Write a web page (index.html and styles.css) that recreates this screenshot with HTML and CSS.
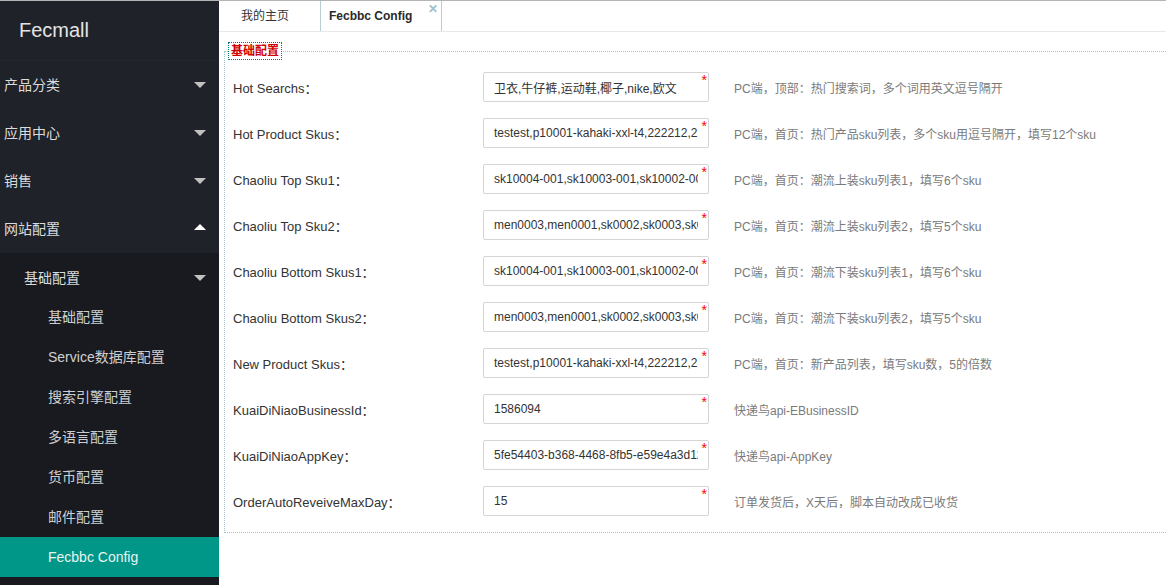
FILE: index.html
```html
<!DOCTYPE html>
<html lang="zh-CN">
<head>
<meta charset="utf-8">
<title>Fecbbc Config</title>
<link rel="stylesheet" href="styles.css">
</head>
<body>
<div class="app">
  <aside class="side">
    <div class="logo">Fecmall</div>
    <ul class="menu">
      <li class="m1"><span>产品分类</span><i class="tri down"></i></li>
      <li class="m1"><span>应用中心</span><i class="tri down"></i></li>
      <li class="m1"><span>销售</span><i class="tri down"></i></li>
      <li class="m1"><span>网站配置</span><i class="tri up"></i></li>
    </ul>
    <ul class="sub">
      <li class="m2"><span>基础配置</span><i class="tri down"></i></li>
      <li class="m3">基础配置</li>
      <li class="m3">Service数据库配置</li>
      <li class="m3">搜索引擎配置</li>
      <li class="m3">多语言配置</li>
      <li class="m3">货币配置</li>
      <li class="m3">邮件配置</li>
      <li class="m3 active">Fecbbc Config</li>
    </ul>
  </aside>
  <main class="main">
    <div class="tabs">
      <div class="tab home">我的主页</div>
      <div class="tab cur">Fecbbc Config<span class="close">✕</span></div>
    </div>
    <fieldset class="box">
      <legend>基础配置</legend>
      <div class="row"><label>Hot Searchs：</label><div class="field"><input value="卫衣,牛仔裤,运动鞋,椰子,nike,欧文"><b>*</b></div><span class="tip">PC端，顶部：热门搜索词，多个词用英文逗号隔开</span></div>
      <div class="row"><label>Hot Product Skus：</label><div class="field"><input value="testest,p10001-kahaki-xxl-t4,222212,222213"><b>*</b></div><span class="tip">PC端，首页：热门产品sku列表，多个sku用逗号隔开，填写12个sku</span></div>
      <div class="row"><label>Chaoliu Top Sku1：</label><div class="field"><input value="sk10004-001,sk10003-001,sk10002-001"><b>*</b></div><span class="tip">PC端，首页：潮流上装sku列表1，填写6个sku</span></div>
      <div class="row"><label>Chaoliu Top Sku2：</label><div class="field"><input value="men0003,men0001,sk0002,sk0003,sk0004"><b>*</b></div><span class="tip">PC端，首页：潮流上装sku列表2，填写5个sku</span></div>
      <div class="row"><label>Chaoliu Bottom Skus1：</label><div class="field"><input value="sk10004-001,sk10003-001,sk10002-001"><b>*</b></div><span class="tip">PC端，首页：潮流下装sku列表1，填写6个sku</span></div>
      <div class="row"><label>Chaoliu Bottom Skus2：</label><div class="field"><input value="men0003,men0001,sk0002,sk0003,sk0004"><b>*</b></div><span class="tip">PC端，首页：潮流下装sku列表2，填写5个sku</span></div>
      <div class="row"><label>New Product Skus：</label><div class="field"><input value="testest,p10001-kahaki-xxl-t4,222212,222213"><b>*</b></div><span class="tip">PC端，首页：新产品列表，填写sku数，5的倍数</span></div>
      <div class="row"><label>KuaiDiNiaoBusinessId：</label><div class="field"><input value="1586094"><b>*</b></div><span class="tip">快递鸟api-EBusinessID</span></div>
      <div class="row"><label>KuaiDiNiaoAppKey：</label><div class="field"><input value="5fe54403-b368-4468-8fb5-e59e4a3d12ab"><b>*</b></div><span class="tip">快递鸟api-AppKey</span></div>
      <div class="row"><label>OrderAutoReveiveMaxDay：</label><div class="field"><input value="15"><b>*</b></div><span class="tip">订单发货后，X天后，脚本自动改成已收货</span></div>
    </fieldset>
  </main>
</div>
</body>
</html>
```
FILE: styles.css
```css
* { box-sizing: border-box; }
html, body { margin: 0; padding: 0; }
body {
  font-family: "Liberation Sans", "Noto Sans CJK SC", sans-serif;
  border-top: 1px solid #b4b4b4;
  height: 585px;
  overflow: hidden;
  background: #fff;
}
.app { display: flex; height: 584px; }
.side {
  width: 219px;
  flex: none;
  background: #181a1f;
  color: rgba(255,255,255,.85);
  font-size: 14px;
}
.logo {
  height: 60px;
  background: #20222a;
  border-bottom: 1px solid #23262e;
  padding-left: 19px;
  line-height: 58px;
  font-size: 20px;
  color: #e4e4e4;
}
ul { list-style: none; margin: 0; padding: 0; }
.menu { background: #20222a; }
.m1, .m2 {
  display: flex;
  justify-content: space-between;
  align-items: center;
  padding: 0 13px 0 4px;
}
.m1 { height: 48px; padding-bottom: 2px; }
.m2 { height: 44px; padding-left: 24px; padding-top: 4px; }
.m3 {
  height: 40px;
  line-height: 40px;
  padding-left: 48px;
  color: rgba(255,255,255,.8);
}
.m3.active { background: #009688; color: #e8f4f2; }
.tri { width: 0; height: 0; border-left: 6px solid transparent; border-right: 6px solid transparent; }
.tri.down { border-top: 6px solid #c2c2c2; margin-top: 2px; }
.tri.up { border-bottom: 6px solid #fff; margin-top: -2px; }

.main { flex: 1; min-width: 0; overflow: hidden; }
.tabs {
  display: flex;
  height: 31px;
  border-bottom: 1px solid #e8e8e8;
  font-size: 12px;
  color: #333;
}
.tab {
  height: 30px;
  line-height: 30px;
  border-right: 1px solid #b8ccd4;
  position: relative;
}
.tab.home { width: 102px; padding-left: 22px; }
.tab.cur { width: 121px; padding-left: 8px; font-weight: bold; color: #2a2a2a; }
.close {
  position: absolute;
  right: 3px;
  top: -7px;
  font-size: 12px;
  color: #9fbfca;
  font-weight: bold;
}
.box {
  margin: 10px -20px 0 5px;
  padding: 4px 0 8px 8px;
  border: 1px dotted #a9c1ca;
  min-width: 0;
}
.box legend {
  margin-left: -5px;
  padding: 1px 2px 0;
  border: 1px dotted #00796b;
  color: #d00000;
  font-size: 12px;
  line-height: 15px;
  font-weight: 600;
}
.row {
  display: flex;
  align-items: center;
  height: 46px;
}
.row label {
  width: 250px;
  flex: none;
  font-size: 13px;
  color: #333;
}
.field { position: relative; width: 226px; height: 30px; flex: none; }
.field input {
  width: 100%;
  height: 30px;
  border: 1px solid #d5d5d5;
  border-radius: 2px;
  padding: 0 10px;
  font-family: "Liberation Sans", "Noto Sans CJK SC", sans-serif;
  font-size: 12px;
  color: #333;
  background: #fff;
  outline: none;
}
.field b {
  position: absolute;
  right: 2px;
  top: 1px;
  color: #f00;
  font-weight: normal;
  font-size: 14px;
  line-height: 14px;
}
.tip {
  margin-left: 25px;
  font-size: 12px;
  color: #7a7a7a;
  white-space: nowrap;
}
```
